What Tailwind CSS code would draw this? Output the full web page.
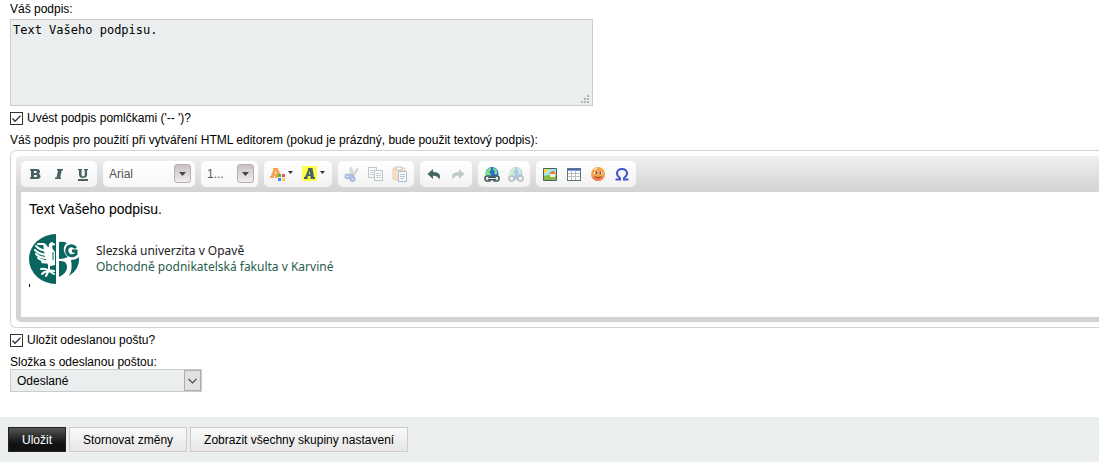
<!DOCTYPE html>
<html lang="cs">
<head>
    <meta charset="UTF-8">
    <meta name="viewport" content="width=device-width, initial-scale=1.0">
    <title>Nastavení podpisu</title>
    <script src="https://cdn.jsdelivr.net/npm/@tailwindcss/browser@4"></script>
</head>
<body class="bg-white text-black text-[12px] font-['Liberation_Sans',Arial,sans-serif] overflow-x-hidden">
    <form>
        <div class="pl-[10px]">
            <!-- Plain text signature -->
            <label for="signature" class="block h-[19px] leading-[18px]">Váš podpis:</label>
            <div class="relative w-[583px] max-w-full">
                <textarea id="signature" class="block w-full h-[87px] resize-none border border-[#cccccc] bg-[#eaeeef] px-[2px] py-[2px] text-[12px] leading-[16px] font-['DejaVu_Sans_Mono',monospace] outline-none">Text Vašeho podpisu.</textarea>
                <svg class="absolute right-[3px] bottom-[2px] pointer-events-none" width="9" height="9" fill="#b4b4b4" shape-rendering="crispEdges" aria-hidden="true">
                    <path d="M6 0h2v2H6zM3 3h2v2H3zM6 3h2v2H6zM0 6h2v2H0zM3 6h2v2H3zM6 6h2v2H6z"/>
                </svg>
            </div>

            <div class="flex items-center h-6">
                <span class="relative flex">
                    <input type="checkbox" id="dashes" checked class="peer appearance-none size-[13px] border border-[#333333] bg-white">
                    <svg class="absolute inset-0 pointer-events-none hidden peer-checked:block" width="13" height="13" fill="none" stroke="#333" stroke-width="1.3"><path d="M2.5 6.5 5 9.3 10.5 3.7"/></svg>
                </span>
                <label for="dashes" class="pl-1">Uvést podpis pomlčkami ('-- ')?</label>
            </div>

            <!-- HTML signature editor -->
            <div id="htmlLabel" class="h-5 leading-[20px] whitespace-nowrap">Váš podpis pro použití při vytváření HTML editorem (pokud je prázdný, bude použit textový podpis):</div>
            <div class="border border-r-0 border-[#d3d3d3] rounded-l-[6px] py-[5px] pl-[5px]">
                <div class="bg-[#d3d3d3] rounded-l-[5px] pb-[5px] overflow-hidden">
                    <div class="flex gap-[6px] h-9 pt-[5px] pl-[5px] bg-linear-to-b from-[#f0f0f0] to-[#d3d3d3]" role="toolbar">
                        <div class="flex items-center h-[26px] px-[2px] rounded-[5px] bg-linear-to-b from-white to-[#f2f2f2]">
                            <button type="button" title="Tučné" class="w-6 flex justify-center"><svg width="16" height="16" fill="#456362"><path fill-rule="evenodd" d="M3 3h7q3 0 3 2.7 0 1.500-1.300 2.100 1.800.500 1.800 2.500Q13.500 13 10.200 13H3v-1.500h1v-7H3zM7 5v2h1.800q1 0 1-1t-1-1zM7 9v2h2q1.200 0 1.200-1T9 9z"/></svg></button>
                            <button type="button" title="Kurzíva" class="w-6 flex justify-center"><svg width="16" height="16" fill="#456362"><path d="M6 3h6v1.500h-1.300L9.200 11.500H10V13H4v-1.500h1.500L7 4.500H6z"/></svg></button>
                            <button type="button" title="Podtržené" class="w-6 flex justify-center"><svg width="16" height="16" fill="#456362"><path d="M3 3h4v1.200H6.500V8.500q0 2 1.700 2t1.600-2V4.200H9V3h4v1.200h-1v4.300Q12 12 8 12T4 8.500V4.200H3zM3 13h10v2H3z"/></svg></button>
                        </div>
                        <div class="relative h-[26px] rounded-[5px] bg-linear-to-b from-white to-[#f7f7f7]">
                            <select aria-label="Písmo" class="appearance-none w-[92px] h-[26px] pl-[6px] text-[#555] outline-none"><option>Arial</option></select>
                            <span class="absolute right-[4px] top-[3px] w-[17px] h-[19px] rounded-[3px] border border-[#b7b0b0] bg-linear-to-b from-[#c9c1c1] to-[#f1eeee] flex justify-center items-center pointer-events-none"><svg width="7" height="4"><path d="M0 0h7L3.500 4z" fill="#4b4545"/></svg></span>
                        </div>
                        <div class="relative h-[26px] rounded-[5px] bg-linear-to-b from-white to-[#f7f7f7]">
                            <select aria-label="Velikost" class="appearance-none w-[57px] h-[26px] pl-[6px] text-[#555] outline-none"><option>1...</option></select>
                            <span class="absolute right-[4px] top-[3px] w-[17px] h-[19px] rounded-[3px] border border-[#b7b0b0] bg-linear-to-b from-[#c9c1c1] to-[#f1eeee] flex justify-center items-center pointer-events-none"><svg width="7" height="4"><path d="M0 0h7L3.500 4z" fill="#4b4545"/></svg></span>
                        </div>
                        <div class="flex items-center h-[26px] px-[2px] rounded-[5px] bg-linear-to-b from-white to-[#f2f2f2]">
                            <button type="button" title="Barva textu" class="w-8 pl-1 flex gap-[2px] items-center">
                                <svg width="16" height="16"><path fill-rule="evenodd" d="M3 2h5l2.500 7H8v3H5v-2H4v2H0v-2h1L3 4zM5.500 5 4.700 7.500h1.800z" fill="#f2a654"/><g shape-rendering="crispEdges"><path d="M8 8h3v3H8z" fill="#52b53c"/><path d="M12 8h3v3h-3z" fill="#ef5350"/><path d="M8 12h3v3H8z" fill="#4285f4"/><path d="M12 12h3v3h-3z" fill="#f9cf4a"/></g></svg>
                                <svg class="mb-1" width="5" height="3"><path d="M0 0h5L2.500 3z" fill="#333"/></svg>
                            </button>
                            <button type="button" title="Barva pozadí" class="w-8 pl-1 flex gap-[2px] items-center">
                                <svg width="16" height="16"><path d="M0 0h15v15H0z" fill="#ffff4a"/><path fill-rule="evenodd" d="M6 2h4.500l1.500 9h1v2H8.500v-2l-.200-1H6l-.300 1v2H2v-2h1L6 4zM7.800 5 6.700 8.300h1.600z" fill="#456362"/></svg>
                                <svg class="mb-1" width="5" height="3"><path d="M0 0h5L2.500 3z" fill="#333"/></svg>
                            </button>
                        </div>
                        <div class="flex items-center h-[26px] px-[2px] rounded-[5px] bg-linear-to-b from-white to-[#f2f2f2]">
                            <button type="button" title="Vyjmout" class="w-6 flex justify-center opacity-40"><svg width="16" height="16" fill="none"><path d="M6.500 9 6 2l1.500-.500L9.500 8zM8 9l5-6.500 1.500.500L10 10z" fill="#b5bebe" stroke="#8b9999"/><path d="M4 9.500q4-1.500 5 0t-2 3" stroke="#4460c8" stroke-width="2"/><circle cx="3.500" cy="10.500" r="2" stroke="#4460c8" stroke-width="2"/><circle cx="8.500" cy="13" r="2" stroke="#4460c8" stroke-width="2"/></svg></button>
                            <button type="button" title="Kopírovat" class="w-6 flex justify-center opacity-40"><svg width="16" height="16" fill="#fff" stroke="#6a8280" shape-rendering="crispEdges"><path d="M.500 1.500h8v10h-8z"/><path d="M2 4.500h4M2 6.500h4M2 8.500h4" stroke="#829ab0"/><path d="M6.500 4.500h8v10h-8z"/><path d="M8 7.500h5M8 9.500h5M8 11.500h5" stroke="#829ab0"/></svg></button>
                            <button type="button" title="Vložit" class="w-6 flex justify-center opacity-40"><svg width="16" height="16"><rect x="1" y="2" width="12" height="12" rx="1" fill="#f4be79" stroke="#dd944e"/><path d="M4 1h6v3H4z" fill="#fff" stroke="#916c4a"/><path d="M6.500 5.500h8v10h-8z" fill="#fff" stroke="#4460b0"/><path d="M8 8.500h5M8 10.500h5M8 12.500h4" stroke="#5870bd"/></svg></button>
                        </div>
                        <div class="flex items-center h-[26px] px-[2px] rounded-[5px] bg-linear-to-b from-white to-[#f2f2f2]">
                            <button type="button" title="Zpět" class="w-6 flex justify-center"><svg width="16" height="16" fill="#456362"><path d="M1.500 8 7 3v3q7 0 7 4.500 0 1.500-1 3-1-4-6-3.700V13z"/></svg></button>
                            <button type="button" title="Znovu" class="w-6 flex justify-center opacity-30"><svg width="16" height="16" fill="#456362"><path d="M14.500 8 9 3v3q-7 0-7 4.500 0 1.500 1 3 1-4 6-3.700V13z"/></svg></button>
                        </div>
                        <div class="flex items-center h-[26px] px-[2px] rounded-[5px] bg-linear-to-b from-white to-[#f2f2f2]">
                            <button type="button" title="Odkaz" class="w-6 flex justify-center"><svg width="16" height="16"><circle cx="8" cy="7.500" r="6.500" fill="#3269d8"/><path d="M4 2.500 7 2v2L5 6l2 2-1 3H2V6zM9 2l3 1 1.500 3.500L12 9l-2-2 1-2-2-1z" fill="#75ec78"/><rect x="1" y="10" width="6" height="5" rx="2" fill="#dfe8e8" stroke="#3f5857" stroke-width="1.500"/><rect x="9" y="10" width="6" height="5" rx="2" fill="#dfe8e8" stroke="#3f5857" stroke-width="1.500"/><path d="M4 12.500h8" stroke="#3f5857" stroke-width="3"/><path d="M4 12.500h8" stroke="#dfe8e8"/></svg></button>
                            <button type="button" title="Odstranit odkaz" class="w-6 flex justify-center opacity-35"><svg width="16" height="16"><circle cx="8" cy="7.500" r="6.500" fill="#3269d8"/><path d="M4 2.500 7 2v2L5 6l2 2-1 3H2V6zM9 2l3 1 1.500 3.500L12 9l-2-2 1-2-2-1z" fill="#75ec78"/><rect x="1" y="10" width="5" height="5" rx="2" fill="#dfe8e8" stroke="#3f5857" stroke-width="1.500"/><rect x="10" y="10" width="5" height="5" rx="2" fill="#dfe8e8" stroke="#3f5857" stroke-width="1.500"/></svg></button>
                        </div>
                        <div class="flex items-center h-[26px] px-[2px] rounded-[5px] bg-linear-to-b from-white to-[#f2f2f2]">
                            <button type="button" title="Obrázek" class="w-6 flex justify-center"><svg width="16" height="16"><path d="M1.500 2.500h13v12h-13z" fill="#9ee4fa"/><path d="M2 3h4.500q0 4-4.500 4.500z" fill="#ffdc4a"/><path d="M2 10q6-2 12 0v4H2z" fill="#8cba45"/><path d="M8 7.500h5V11H8z" fill="#fbf0dd"/><path d="m7 8 3-3h2l2 3z" fill="#ee7b35"/><path d="M1.500 2.500h13v12h-13z" fill="none" stroke="#456362"/></svg></button>
                            <button type="button" title="Tabulka" class="w-6 flex justify-center"><svg width="16" height="16" shape-rendering="crispEdges"><path d="M1.500 2.500h13v12h-13z" fill="#fff"/><path d="M2 7.500h12M2 10.500h12M5.500 5v9M9.500 5v9" stroke="#b8bfc0"/><path d="M1.500 2.500h13v12h-13z" fill="none" stroke="#5f7978"/><path d="M2 3h13v1H2z" fill="#3a5cd0"/><path d="M2 4h12v1H2z" fill="#8fa3d8"/></svg></button>
                            <button type="button" title="Smajlík" class="w-6 flex justify-center"><svg width="16" height="16"><circle cx="8" cy="8" r="7" fill="#f6a24e"/><path d="M1.500 10q6.500 4 13 0-1.500 5-6.500 5t-6.500-5z" fill="#f08650"/><path d="M4 6h3v2H4zM9 6h3v2H9z" fill="#fff"/><path d="M5.500 6H7v2H5.500zM9.500 6H11v2H9.500z" fill="#444"/><path d="M4.500 10.500q3.500 2.500 7 0" fill="none" stroke="#a84c2a" stroke-width="1.300"/><path d="M4 4q1-1.500 3-1.500" fill="none" stroke="#ffdca6" stroke-width="1.500"/></svg></button>
                            <button type="button" title="Speciální znak" class="w-6 flex justify-center"><svg width="16" height="16" fill="none" stroke="#4357ca" stroke-width="2"><path d="M1.500 13.500H6V12Q2.500 9.500 3 6.500 4 3 8 3t5 3.500q.500 3-3 5.500v1.500h4.500"/></svg></button>
                        </div>
                    </div>
                    <div class="ml-[5px] h-[125px] bg-white pl-2 pt-2 outline-none" contenteditable="true" spellcheck="false" role="textbox" aria-labelledby="htmlLabel">
                        <p class="text-[14px] leading-[18px]">Text Vašeho podpisu.</p>
                        <div class="flex items-center gap-4 mt-4 font-['Noto_Sans',sans-serif] text-[12px] leading-[16px]">
                            <svg width="51" height="50" viewBox="0 0 51 50" role="img" aria-label="Slezská univerzita v Opavě">
                                <path d="M27 0v50A27 25 0 0 1 27 0z" fill="#08655f"/>
                                <!-- Eagle -->
                                <g fill="none" stroke="#fff" stroke-width="2" stroke-linecap="round">
                                    <path d="M9 10h6q3 2 3 6M7 12q4 4 10 5M6 16q4 4 11 5M7 20q4 4 11 4M9 24q4 3 10 3M13 28q4 1 7 0"/>
                                    <path d="M20 31v6M12 35q4-1 7 1l6 1M13 40q3-3 7-3l5 3M17 42l2-4"/>
                                </g>
                                <path d="M14 10q4 3 6 3-1-4 3-5l3 2v1l-3 1q0 3 3 6v13l-4 1-3-1-3-8z" fill="#fff"/>
                                <path d="M24 18v8" stroke="#08655f"/>
                                <!-- Monogram -->
                                <g fill="#08655f">
                                    <path d="M30 8q4-1 8 1-4 3-3 8 1 4 4 6-4 2-9 2z"/>
                                    <path d="M30 27q8-1 8 6 0 6-8 10z"/>
                                    <path d="M42 26q5 0 8-3 1 12-10 19 4-7 2-16z"/>
                                    <path d="M47 14q-4-4-8-1-3 5 1 8 4 2 7-1v-3h-4" fill="none" stroke="#08655f" stroke-width="3"/>
                                </g>
                            </svg>
                            <div>
                                <div class="text-[#222]">Slezská univerzita v Opavě</div>
                                <div class="text-[#285c4e]">Obchodně podnikatelská fakulta v Karviné</div>
                            </div>
                        </div>
                        <div class="w-px h-[3px] bg-black"></div>
                    </div>
                </div>
            </div>

            <div class="flex items-center h-6">
                <span class="relative flex">
                    <input type="checkbox" id="saveSent" checked class="peer appearance-none size-[13px] border border-[#333333] bg-white">
                    <svg class="absolute inset-0 pointer-events-none hidden peer-checked:block" width="13" height="13" fill="none" stroke="#333" stroke-width="1.3"><path d="M2.500 6.500 5 9.300 10.500 3.700"/></svg>
                </span>
                <label for="saveSent" class="pl-1">Uložit odeslanou poštu?</label>
            </div>

            <!-- Sent mail folder -->
            <label for="folder" class="block h-[17px] leading-[20px]">Složka s odeslanou poštou:</label>
            <div class="relative w-[192px]">
                <select id="folder" class="block appearance-none w-full h-[23px] border border-[#cccccc] bg-[#eaeeef] pl-[6px] pt-px outline-none"><option>Odeslané</option></select>
                <span class="absolute right-px top-px w-[17px] h-[21px] border border-[#adadad] bg-[#e1e1e1] flex justify-center items-center pointer-events-none"><svg width="9" height="6" fill="none" stroke="#444" stroke-width="1.2"><path d="m.500.800 4 4 4-4"/></svg></span>
            </div>
        </div>

        <div class="flex gap-[3px] mt-[25px] py-[10px] pl-2 bg-[#eaeeef]">
            <button type="submit" class="h-[25px] px-[13px] border border-[#222] bg-linear-to-b from-[#555] to-[#111] to-70% text-white">Uložit</button>
            <button type="reset" class="h-[25px] px-[13px] border border-[#cccccc] bg-linear-to-b from-[#fafafa] to-[#e8e6e6]">Stornovat změny</button>
            <button type="button" class="h-[25px] px-[13px] border border-[#cccccc] bg-linear-to-b from-[#fafafa] to-[#e8e6e6]">Zobrazit všechny skupiny nastavení</button>
        </div>
    </form>
</body>
</html>
